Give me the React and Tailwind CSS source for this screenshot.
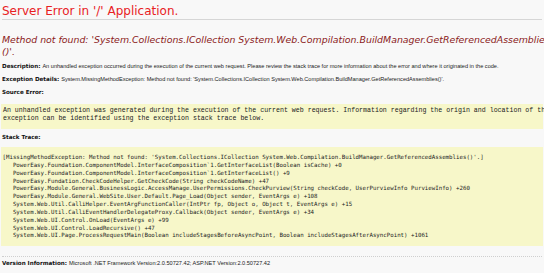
export default function App() {
  const stack = [
    "[MissingMethodException: Method not found: 'System.Collections.ICollection System.Web.Compilation.BuildManager.GetReferencedAssemblies()'.]",
    "   PowerEasy.Foundation.ComponentModel.InterfaceComposition`1.GetInterfaceList(Boolean isCache) +0",
    "   PowerEasy.Foundation.ComponentModel.InterfaceComposition`1.GetInterfaceList() +9",
    "   PowerEasy.Fundation.CheckCodeHelper.GetCheckCode(String checkCodeName) +47",
    "   PowerEasy.Module.General.BusinessLogic.AccessManage.UserPermissions.CheckPurview(String checkCode, UserPurviewInfo PurviewInfo) +260",
    "   PowerEasy.Module.General.WebSite.User.Default.Page_Load(Object sender, EventArgs e) +108",
    "   System.Web.Util.CalliHelper.EventArgFunctionCaller(IntPtr fp, Object o, Object t, EventArgs e) +15",
    "   System.Web.Util.CalliEventHandlerDelegateProxy.Callback(Object sender, EventArgs e) +34",
    "   System.Web.UI.Control.OnLoad(EventArgs e) +99",
    "   System.Web.UI.Control.LoadRecursive() +47",
    "   System.Web.UI.Page.ProcessRequestMain(Boolean includeStagesBeforeAsyncPoint, Boolean includeStagesAfterAsyncPoint) +1061",
  ];
  const bold = "font-['DejaVu_Sans',sans-serif] font-bold text-[#111]";
  return (
    <div className="w-[544px] h-[273px] overflow-hidden bg-[#f8f8f8] px-[2px] text-[#222]">
      <h1 className="pt-[4px] text-[12px] leading-[14px] whitespace-nowrap text-[#e8211f] font-['DejaVu_Sans',sans-serif]">
        Server Error in '/' Application.
      </h1>
      <div className="mt-[1px] h-px bg-[#d6d6d6]" />
      <h2 className="mt-[13.5px] text-[9.4px] leading-[12px] italic whitespace-nowrap text-[#8b1a1a] font-['DejaVu_Sans',sans-serif]">
        <div>Method not found: 'System.Collections.ICollection System.Web.Compilation.BuildManager.GetReferencedAssemblies</div>
        <div>()'.</div>
      </h2>
      <div className="mt-[5px] text-[5.6px] leading-[6.7px] whitespace-nowrap font-['Liberation_Sans',sans-serif]">
        <div>
          <span className={bold}>Description: </span>
          An unhandled exception occurred during the execution of the current web request. Please review the stack trace for more information about the error and where it originated in the code.
        </div>
        <div className="mt-[6.7px]">
          <span className={bold}>Exception Details: </span>
          System.MissingMethodException: Method not found: 'System.Collections.ICollection System.Web.Compilation.BuildManager.GetReferencedAssemblies()'.
        </div>
        <div className="mt-[6.7px]">
          <span className={bold}>Source Error:</span>
        </div>
        <div className="mt-[8px] -mx-[1px] bg-[#f7f7c9] pl-[2px] pt-[3px] pb-[5px] text-[6.6px] leading-[8.5px] font-['Liberation_Mono',monospace] text-[#222]">
          <div>An unhandled exception was generated during the execution of the current web request. Information regarding the origin and location of the</div>
          <div>exception can be identified using the exception stack trace below.</div>
        </div>
        <div className="mt-[4.65px]">
          <span className={bold}>Stack Trace:</span>
        </div>
        <div className="mt-[6.65px] -mx-[1px] bg-[#f7f7c9] pl-[1.5px] pt-[7px] pb-[5.5px] text-[5.75px] leading-[7.85px] font-['DejaVu_Sans_Mono',monospace] text-[#222]">
          {stack.map((l, i) => (
            <div key={i} className="whitespace-pre">{l}</div>
          ))}
        </div>
        <div className="mt-[10px] border-t border-dotted border-[#cfcfcf]" />
        <div className="mt-[3.65px]">
          <span className={bold}>Version Information: </span>
          Microsoft .NET Framework Version:2.0.50727.42; ASP.NET Version:2.0.50727.42
        </div>
      </div>
    </div>
  );
}
